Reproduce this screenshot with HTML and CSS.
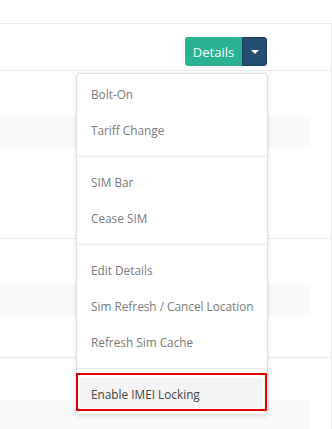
FILE: index.html
```html
<!DOCTYPE html>
<html lang="en">
  <head>
    <meta charset="UTF-8" />
    <meta name="viewport" content="width=device-width, initial-scale=1.0" />
    <title>SIM Details</title>
    <link rel="stylesheet" href="styles.css">
  </head>
  <body>
    <div class="card">
      <div class="card-header">
        <div class="btn-group">
          <button class="btn btn-details">Details</button>
          <button class="btn btn-toggle"><span class="caret"></span></button>

          <ul class="dropdown-menu">
            <li><a href="#">Bolt-On</a></li>
            <li><a href="#">Tariff Change</a></li>
            <li class="divider"></li>
            <li><a href="#">SIM Bar</a></li>
            <li><a href="#">Cease SIM</a></li>
            <li class="divider"></li>
            <li><a href="#">Edit Details</a></li>
            <li><a href="#">Sim Refresh / Cancel Location</a></li>
            <li><a href="#">Refresh Sim Cache</a></li>
            <li class="divider divider-last"></li>
            <li class="marked"><a href="#" class="active">Enable IMEI Locking</a></li>
          </ul>
        </div>
      </div>

      <div class="section section-first">
        <table class="striped">
          <tr><td></td></tr>
          <tr><td></td></tr>
          <tr><td></td></tr>
        </table>
      </div>

      <div class="section">
        <table class="striped">
          <tr><td></td></tr>
          <tr><td></td></tr>
          <tr><td></td></tr>
        </table>
      </div>

      <div class="section section-last">
        <table class="striped">
          <tr><td></td></tr>
          <tr><td></td></tr>
        </table>
      </div>
    </div>
  </body>
</html>
```

FILE: styles.css
```css
body {
  font-family: "Open Sans", "Liberation Sans", sans-serif;
  margin: 0;
  padding-top: 23px;
  background: #fff;
  overflow: hidden;
}

.card {
  margin-left: -20px;
  border: 1px solid #e7eaec;
  border-bottom: none;
  background: #fff;
}

.card-header {
  display: flex;
  justify-content: flex-end;
  padding: 13px 64px 4px 0;
  border-bottom: 1px solid #e7eaec;
}

.btn-group {
  position: relative;
  display: flex;
}

.btn {
  border: none;
  margin: 0;
  font-family: inherit;
  font-size: 13px;
  color: #fff;
  height: 29px;
  cursor: pointer;
}

.btn-details {
  width: 57px;
  padding: 0;
  background-color: #2ab393;
  border-radius: 3px 0 0 3px;
}

.btn-toggle {
  width: 25px;
  padding: 0;
  background-color: #234d73;
  border: 1px solid #1b3f60;
  border-radius: 0 3px 3px 0;
  display: flex;
  align-items: center;
  justify-content: center;
}

.caret {
  width: 0;
  height: 0;
  border-left: 4px solid transparent;
  border-right: 4px solid transparent;
  border-top: 4px solid #fff;
}

.dropdown-menu {
  position: absolute;
  top: 36px;
  right: -1px;
  width: 190px;
  margin: 0;
  padding: 3px 0 3px;
  list-style: none;
  background: #fff;
  border: 1px solid #dcdfe2;
  border-radius: 4px;
  box-shadow: 0 1px 4px rgba(0, 0, 0, 0.12);
  z-index: 10;
}

.dropdown-menu a {
  display: block;
  height: 36px;
  line-height: 34px;
  padding-left: 14px;
  font-size: 11.8px;
  color: #7a7a7a;
  text-decoration: none;
  white-space: nowrap;
}

.dropdown-menu .divider {
  height: 1px;
  margin: 7px 0 8px;
  background: #e7eaec;
}

.dropdown-menu .divider-last {
  margin-bottom: 4px;
}

.dropdown-menu .marked {
  border: 2px solid #e00000;
  padding: 3px 2px 1px;
  margin: 0 0 0 -1px;
}

.dropdown-menu .marked a {
  height: 30px;
  line-height: 33px;
  padding-left: 11px;
  background: #f4f4f4;
  color: #444;
}

.section {
  padding: 10px 20px 6px 0;
  border-bottom: 1px solid #e7eaec;
}

.section-first {
  padding-bottom: 55px;
}

.section-last {
  padding-top: 8px;
}

.striped {
  width: 100%;
  border-collapse: collapse;
}

.striped td {
  height: 34px;
  padding: 0;
}

.striped tr:nth-child(even) td {
  background: #f9f9f9;
}
```
